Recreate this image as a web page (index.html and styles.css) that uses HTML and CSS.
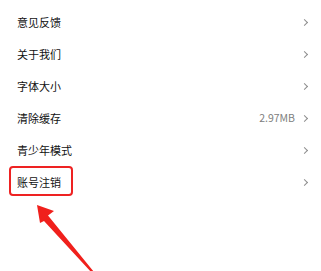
FILE: index.html
```html
<!DOCTYPE html>
<html lang="zh">
<head>
<meta charset="utf-8">
<link rel="stylesheet" href="styles.css">
</head>
<body>
<div class="page">
  <ul class="menu">
    <li class="row"><span class="label">意见反馈</span><span class="right"><span class="chev"></span></span></li>
    <li class="row"><span class="label">关于我们</span><span class="right"><span class="chev"></span></span></li>
    <li class="row"><span class="label">字体大小</span><span class="right"><span class="chev"></span></span></li>
    <li class="row"><span class="label">清除缓存</span><span class="right"><span class="value">2.97MB</span><span class="chev"></span></span></li>
    <li class="row"><span class="label">青少年模式</span><span class="right"><span class="chev"></span></span></li>
    <li class="row highlight"><span class="label">账号注销</span><span class="right"><span class="chev"></span></span><span class="mark"></span></li>
  </ul>
  <svg class="arrow" width="70" height="75" viewBox="0 0 70 75">
    <polygon points="7,5 24,11 18,15.5 64,72 62,73 14,21 10,23" fill="#f0201c"/>
  </svg>
</div>
</body>
</html>
```
FILE: styles.css
```css
* { box-sizing: border-box; }
html, body { margin: 0; padding: 0; background: #fff; }
body {
  font-family: "Noto Sans CJK SC", "Noto Sans", sans-serif;
  width: 321px;
  height: 271px;
  overflow: hidden;
}
.page { position: relative; width: 321px; height: 271px; padding-top: 6px; }
.menu { list-style: none; margin: 0; padding: 0; }
.row {
  position: relative;
  height: 32px;
  display: flex;
  align-items: center;
  justify-content: space-between;
  padding: 0 13px 0 17px;
}
.label { font-size: 11px; color: #111; line-height: 1; }
.right { display: flex; align-items: center; gap: 7px; }
.value { font-size: 10.5px; color: #808080; line-height: 1; }
.chev {
  width: 5px; height: 5px;
  border-top: 1px solid #8c8c8c;
  border-right: 1px solid #8c8c8c;
  transform: rotate(45deg);
  margin-right: 1px;
}
.mark {
  position: absolute;
  left: 9px; top: 0px;
  width: 64px; height: 30px;
  border: 2.5px solid #ee2222;
  border-radius: 4px;
}
.arrow { position: absolute; left: 30px; top: 200px; }
```
